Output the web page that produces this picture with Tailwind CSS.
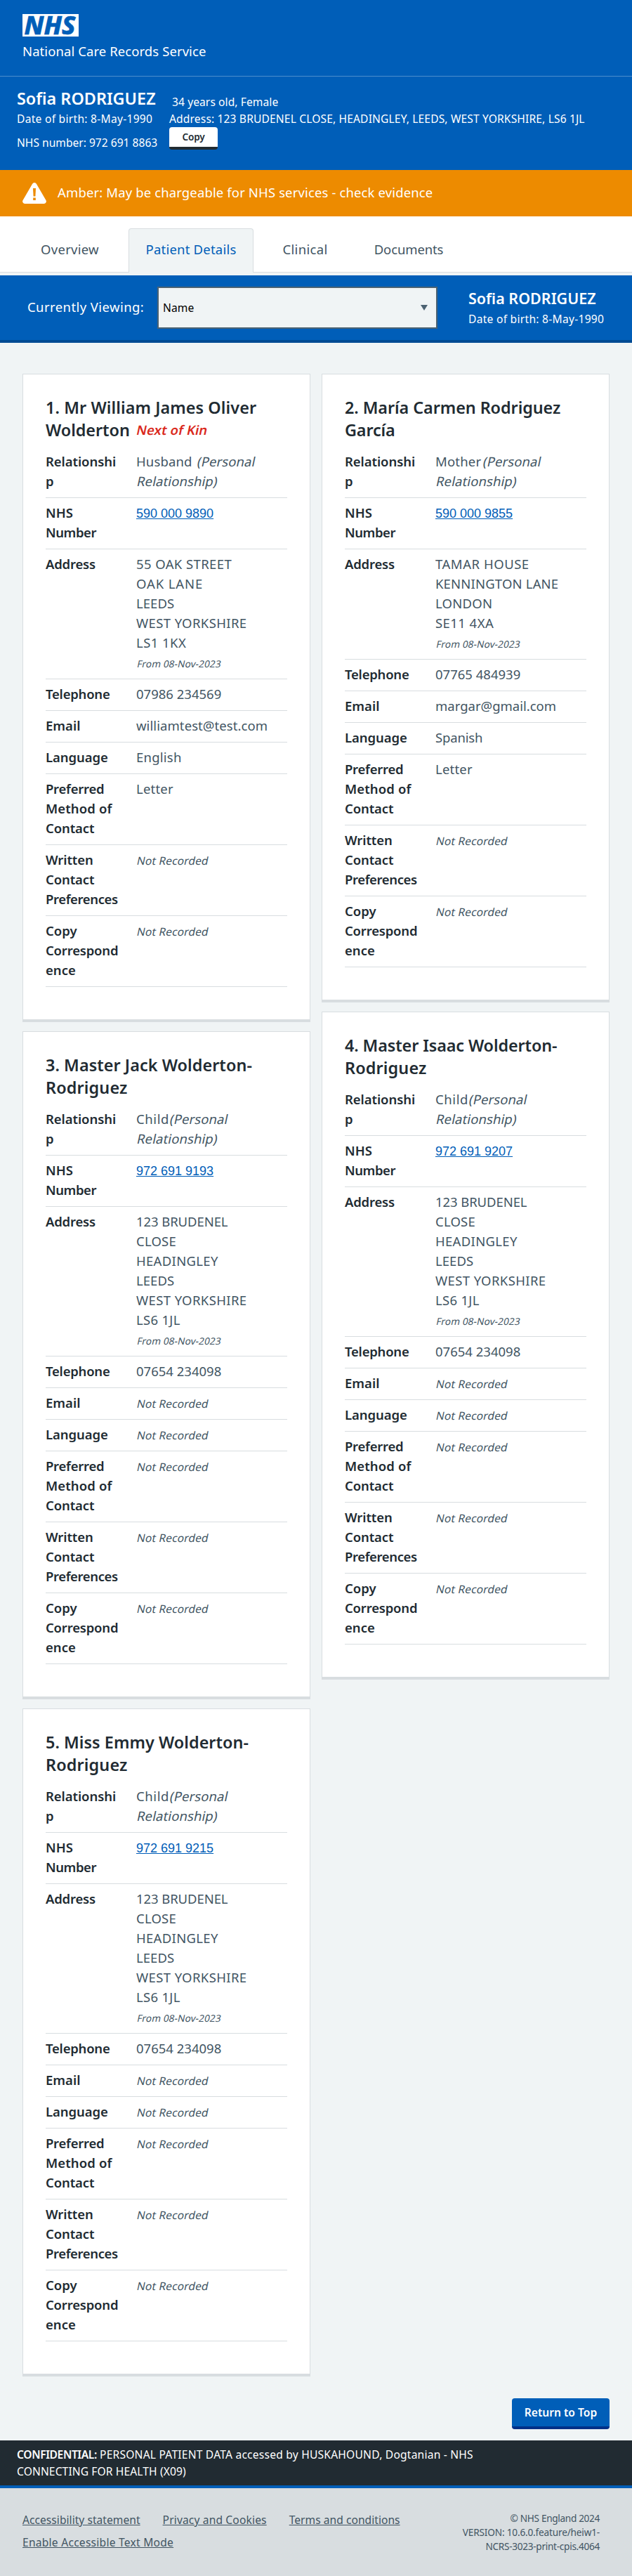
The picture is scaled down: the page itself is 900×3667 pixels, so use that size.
<!DOCTYPE html>
<html lang="en">
<head>
<meta charset="utf-8">
<title>National Care Records Service</title>
<script src="https://cdn.jsdelivr.net/npm/@tailwindcss/browser@4"></script>
</head>
<body class="bg-[#f0f4f5] font-['Noto_Sans',sans-serif] text-[18.5px] leading-[28px] whitespace-nowrap">

<header class="h-[109px] border-b border-[#4c8ecc] bg-[#005eb8] pl-8 pt-5 text-white">
  <svg class="block" width="80" height="32" viewBox="0 0 80 32" aria-label="NHS">
    <rect width="80" height="32" fill="#fff"/>
    <text x="2.5" y="28.5" font-family="Noto Sans, sans-serif" font-weight="800" font-style="italic" font-size="35.5" textLength="73" lengthAdjust="spacingAndGlyphs" fill="#005eb8" stroke="#005eb8" stroke-width=".6">NHS</text>
  </svg>
  <div class="mt-[7px] tracking-[0.08px]">National Care Records Service</div>
</header>

<section class="flex h-[133px] bg-[#005eb8] pl-6 text-[15.6px] leading-6 text-white">
  <div class="w-[217px] pt-[15px]">
    <h1 class="text-[23.4px] font-semibold leading-8">Sofia RODRIGUEZ</h1>
    <div class="mt-px tracking-[0.27px]">Date of birth: 8-May-1990</div>
    <div class="mt-[10px]">NHS number: 972 691 8863</div>
  </div>
  <div class="pt-6">
    <div class="pl-1 tracking-[0.08px]">34 years old, Female</div>
    <div class="tracking-[0.14px]">Address: 123 BRUDENEL CLOSE, HEADINGLEY, LEEDS, WEST YORKSHIRE, LS6 1JL</div>
    <button class="block h-8 w-[69px] rounded-[4px] border-b-4 border-[#212b32] bg-white text-[13.6px] font-semibold leading-7 tracking-[-0.2px] text-[#212b32]">Copy</button>
  </div>
</section>

<section class="flex h-[66px] bg-[#ed8b00] pl-8 pt-[18px] text-white">
  <svg width="34" height="30" viewBox="0 0 34 30">
    <path d="M14.1 1.7a3.4 3.4 0 0 1 5.8 0L33.4 25a3.3 3.3 0 0 1-2.9 5h-27a3.3 3.3 0 0 1-2.9-5z" fill="#fff"/>
    <path d="M15 8h4l-.6 11.5h-2.800z" fill="#ed8b00"/>
    <rect x="15.200" y="21.500" width="3.600" height="3.500" fill="#ed8b00"/>
  </svg>
  <span class="ml-4 tracking-[0.13px]">Amber: May be chargeable for NHS services - check evidence</span>
</section>

<nav class="flex h-20 gap-[17px] bg-white pl-[33px] pt-[17px] text-center text-[#425563] shadow-[inset_0_-1px_0_#d8dde0]">
  <a class="w-[133px] pt-4 tracking-[0.26px]">Overview</a>
  <a class="h-[63px] w-[178px] rounded-t-[4px] border border-b-0 border-[#d8dde0] bg-[#f0f4f5] pt-[15px] tracking-[0.21px] text-[#005eb8]">Patient Details</a>
  <a class="w-[113px] pt-4 tracking-[0.32px]">Clinical</a>
  <a class="w-[148px] pt-4 tracking-[-0.12px]">Documents</a>
</nav>

<section class="mt-1 flex h-24 border-b-4 border-[#004b93] bg-[#005eb8] pl-[39px] text-white">
  <span class="w-[185px] pt-[31px] tracking-[0.42px]">Currently Viewing:</span>
  <div class="mt-4 flex h-[60px] w-[399px] items-center justify-between border-2 border-[#4c6272] bg-[#f0f4f5] pl-[6px] pr-3 text-[15.6px] leading-6 tracking-[0.11px] text-black">
    <span>Name</span>
    <svg width="10" height="8" viewBox="0 0 10 8"><path d="M0 0h10L5 8z" fill="#4c6272"/></svg>
  </div>
  <div class="ml-11 pt-[19px]">
    <div class="text-[21.5px] font-semibold">Sofia RODRIGUEZ</div>
    <div class="mt-[3px] text-[15.6px] leading-6 tracking-[0.27px]">Date of birth: 8-May-1990</div>
  </div>
</section>

<main class="flex gap-4 pl-8 pt-11">
  <div id="left" class="w-[410px]"></div>
  <div id="right" class="w-[410px]"></div>
</main>

<div class="flex justify-end pb-4 pr-8 pt-[18px]">
  <button class="h-11 w-[139px] rounded-[4px] border-b-4 border-[#003087] bg-[#005eb8] text-[15.6px] font-semibold leading-10 text-white">Return to Top</button>
</div>

<section class="h-16 bg-[#212b32] pl-6 pt-2 text-[15.6px] leading-6 text-white">
  <div><b class="font-semibold tracking-[-0.38px]">CONFIDENTIAL:</b> <span class="tracking-[0.21px]">PERSONAL PATIENT DATA accessed by HUSKAHOUND, Dogtanian - NHS</span></div>
  <div class="tracking-[0.11px]">CONNECTING FOR HEALTH (X09)</div>
</section>

<footer class="flex h-[129px] justify-between border-t-4 border-[#005eb8] bg-[#d8dde0] pl-8 pr-[46px] pt-[33px] text-[#425563]">
  <div class="text-[15.6px] leading-6">
    <div class="flex gap-8">
      <a class="underline tracking-[0.03px]">Accessibility statement</a>
      <a class="underline tracking-[0.14px]">Privacy and Cookies</a>
      <a class="underline tracking-[0.03px]">Terms and conditions</a>
    </div>
    <div class="mt-2"><a class="underline tracking-[0.24px]">Enable Accessible Text Mode</a></div>
  </div>
  <div class="text-right text-[13.65px] leading-5">
    <div class="tracking-[-0.34px]">© NHS England 2024</div>
    <div class="tracking-[-0.19px]">VERSION: 10.6.0.feature/heiw1-</div>
    <div class="tracking-[-0.3px]">NCRS-3023-print-cpis.4064</div>
  </div>
</footer>

<script>
const track = {
  "1. Mr William James Oliver": "tracking-[0.09px]", "Wolderton": "tracking-[-0.04px]",
  "2. María Carmen Rodriguez": "tracking-[-0.07px]", "García": "tracking-[-0.14px]",
  "3. Master Jack Wolderton-": "tracking-[0.06px]", "4. Master Isaac Wolderton-": "tracking-[-0.11px]",
  "5. Miss Emmy Wolderton-": "tracking-[0.05px]", "Rodriguez": "tracking-[0.14px]",
  "Relationshi": "tracking-[-0.07px]", "Number": "tracking-[-0.44px]", "Address": "tracking-[-0.21px]",
  "Telephone": "tracking-[-0.22px]", "Language": "tracking-[-0.08px]", "Preferred": "tracking-[-0.26px]",
  "Method of": "tracking-[0.11px]", "Contact": "tracking-[-0.12px]", "Written": "tracking-[-0.1px]",
  "Preferences": "tracking-[-0.4px]", "Correspond": "tracking-[-0.19px]",
  "Husband": "tracking-[0.13px]", "Mother": "tracking-[0.19px]", "Child": "tracking-[0.58px]",
  "55 OAK STREET": "tracking-[0.4px]", "OAK LANE": "tracking-[0.89px]", "LEEDS": "tracking-[0.05px]",
  "WEST YORKSHIRE": "tracking-[0.38px]", "LS1 1KX": "tracking-[0.45px]", "LS6 1JL": "tracking-[0.3px]",
  "TAMAR HOUSE": "tracking-[0.53px]", "KENNINGTON LANE": "tracking-[0.17px]", "LONDON": "tracking-[0.23px]",
  "SE11 4XA": "tracking-[0.44px]", "williamtest@test.com": "tracking-[0.08px]", "English": "tracking-[0.24px]",
  "Spanish": "tracking-[-0.17px]", "Letter": "tracking-[0.21px]", "123 BRUDENEL": "tracking-[-0.08px]",
  "HEADINGLEY": "tracking-[0.31px]", "CLOSE": "tracking-[0.2px]"
};
const line = t => `<div class="${track[t] || ""}">${t}</div>`;
const slant = (t, cls) => `<span class="inline-block origin-[0_75%] -skew-x-12 ${cls}">${t}</span>`;
const missing = slant("Not Recorded", "text-[15.6px] leading-[26px] tracking-[0.1px]");
const row = (label, value) => `
  <div class="flex border-b border-[#d8dde0] pt-[7px] pb-[9px]">
    <dt class="w-[129px] font-semibold text-[#212b32]">${label.map(line).join("")}</dt>
    <dd class="text-[#425563]">${value}</dd>
  </div>`;
const text = v => v ? line(v) : `<div class="h-7">${missing}</div>`;
const card = p => `
  <article class="mb-[13px] border border-b-4 border-[#d8dde0] bg-white px-8 pt-[31px] pb-[46px]">
    <h2 class="mb-2 text-[23.4px] font-semibold leading-8 text-[#212b32]">
      ${line(p.name[0])}
      <div class="flex gap-2">${line(p.name[1])}${p.kin ? slant("Next of Kin", "text-[18.5px] tracking-[0.1px] text-[#da291c]") : ""}</div>
    </h2>
    <dl>
      ${row(["Relationshi", "p"], `<div class="flex ${p.gap}">${line(p.rel)}${slant("(Personal", "tracking-[0.1px]")}</div>${slant("Relationship)", "block tracking-[0.1px]")}`)}
      ${row(["NHS", "Number"], `<a class="font-['Liberation_Sans',sans-serif] text-[18px] text-[#005eb8] underline">${p.nhs}</a>`)}
      ${row(["Address"], p.address.map(line).join("") + `<div class="h-7">${slant("From 08-Nov-2023", "text-[13.65px] leading-[28px] tracking-[0.1px]")}</div>`)}
      ${row(["Telephone"], text(p.tel))}
      ${row(["Email"], text(p.email))}
      ${row(["Language"], text(p.lang))}
      ${row(["Preferred", "Method of", "Contact"], text(p.method))}
      ${row(["Written", "Contact", "Preferences"], text())}
      ${row(["Copy", "Correspond", "ence"], text())}
    </dl>
  </article>`;
const home = ["123 BRUDENEL", "CLOSE", "HEADINGLEY", "LEEDS", "WEST YORKSHIRE", "LS6 1JL"];
const people = [
  { name: ["1. Mr William James Oliver", "Wolderton"], kin: true, rel: "Husband", gap: "gap-[7px]", nhs: "590 000 9890",
    address: ["55 OAK STREET", "OAK LANE", "LEEDS", "WEST YORKSHIRE", "LS1 1KX"], tel: "07986 234569",
    email: "williamtest@test.com", lang: "English", method: "Letter" },
  { name: ["2. María Carmen Rodriguez", "García"], rel: "Mother", gap: "gap-[2px]", nhs: "590 000 9855",
    address: ["TAMAR HOUSE", "KENNINGTON LANE", "LONDON", "SE11 4XA"], tel: "07765 484939",
    email: "margar@gmail.com", lang: "Spanish", method: "Letter" },
  { name: ["3. Master Jack Wolderton-", "Rodriguez"], rel: "Child", gap: "gap-0", nhs: "972 691 9193", address: home, tel: "07654 234098" },
  { name: ["4. Master Isaac Wolderton-", "Rodriguez"], rel: "Child", gap: "gap-0", nhs: "972 691 9207", address: home, tel: "07654 234098" },
  { name: ["5. Miss Emmy Wolderton-", "Rodriguez"], rel: "Child", gap: "gap-0", nhs: "972 691 9215", address: home, tel: "07654 234098" }
];
people.forEach((p, i) => document.getElementById(i % 2 ? "right" : "left").insertAdjacentHTML("beforeend", card(p)));
</script>
</body>
</html>
